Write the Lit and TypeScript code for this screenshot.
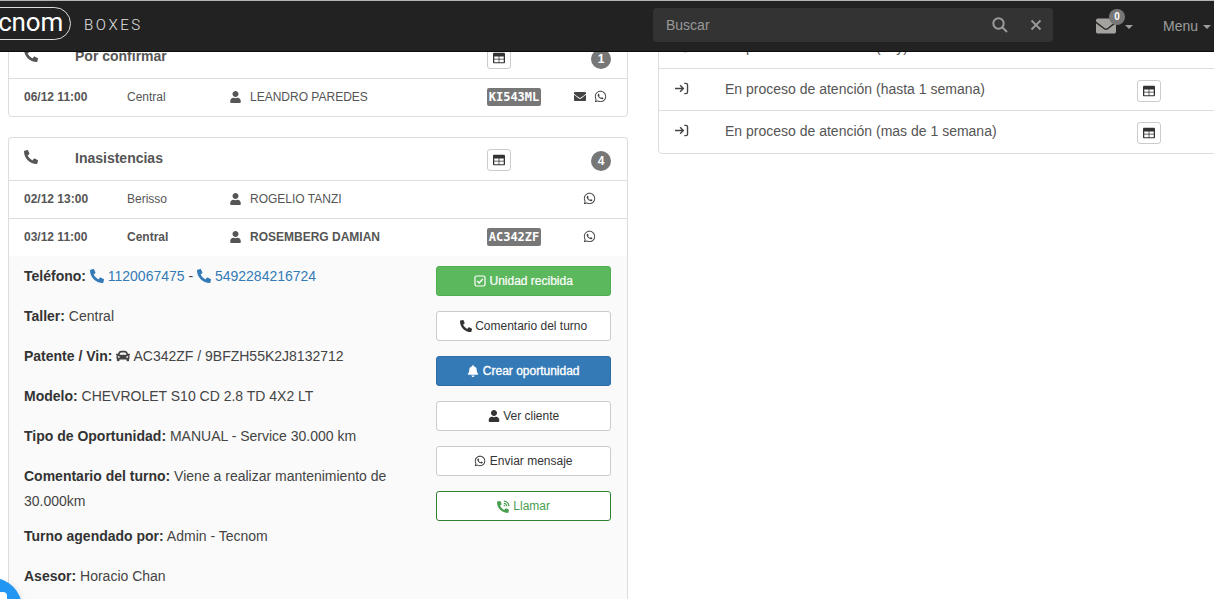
import { LitElement, html, css } from "lit";
import { customElement } from "lit/decorators.js";

const P = {
  phone: ["0 0 512 512", "M497.39 361.8l-112-48a24 24 0 0 0-28 6.9l-49.6 60.6A370.66 370.66 0 0 1 130.6 204.11l60.6-49.6a23.94 23.94 0 0 0 6.9-28l-48-112A24.16 24.16 0 0 0 122.6.61l-104 24A24 24 0 0 0 0 48c0 256.5 207.9 464 464 464a24 24 0 0 0 23.4-18.6l24-104a24.29 24.29 0 0 0-14.01-27.6z"],
  user: ["0 0 448 512", "M224 256c70.7 0 128-57.3 128-128S294.7 0 224 0 96 57.3 96 128s57.3 128 128 128zm89.6 32h-16.7c-22.2 10.2-46.9 16-72.9 16s-50.6-5.8-72.9-16h-16.7C60.2 288 0 348.2 0 422.4V464c0 26.5 21.5 48 48 48h352c26.5 0 48-21.5 48-48v-41.6c0-74.2-60.2-134.4-134.4-134.4z"],
  mail: ["0 0 512 512", "M502.3 190.8c3.9-3.1 9.7-.2 9.7 4.7V400c0 26.5-21.5 48-48 48H48c-26.5 0-48-21.5-48-48V195.6c0-5 5.7-7.8 9.7-4.7 22.4 17.4 52.1 39.5 154.1 113.6 21.1 15.4 56.7 47.8 92.2 47.6 35.7.3 72-32.8 92.3-47.6 102-74.1 131.6-96.3 154-113.7zM256 320c23.2.4 56.6-29.2 73.4-41.4 132.7-96.3 142.8-104.7 173.4-128.7 5.8-4.5 9.2-11.5 9.2-18.9v-19c0-26.5-21.5-48-48-48H48C21.5 64 0 85.5 0 112v19c0 7.4 3.4 14.3 9.2 18.9 30.6 23.9 40.7 32.4 173.4 128.7 16.8 12.2 50.2 41.8 73.4 41.4z"],
  wa: ["0 0 448 512", "M380.9 97.1C339 55.1 283.2 32 223.9 32c-122.4 0-222 99.6-222 222 0 39.1 10.2 77.3 29.6 111L0 480l117.7-30.9c32.4 17.7 68.9 27 106.1 27h.1c122.3 0 224.1-99.6 224.1-222 0-59.3-25.2-115-67.1-157zm-157 341.6c-33.2 0-65.7-8.9-94-25.7l-6.7-4-69.8 18.3L72 359.2l-4.4-7c-18.5-29.4-28.2-63.3-28.2-98.2 0-101.7 82.8-184.5 184.6-184.5 49.3 0 95.6 19.2 130.4 54.1 34.8 34.9 56.2 81.2 56.1 130.5 0 101.8-84.9 184.6-186.6 184.6zm101.2-138.2c-5.5-2.8-32.8-16.2-37.9-18-5.1-1.9-8.8-2.8-12.5 2.8-3.7 5.6-14.3 18-17.6 21.8-3.2 3.7-6.5 4.2-12 1.4-32.6-16.3-54-29.1-75.5-66-5.7-9.8 5.7-9.1 16.3-30.3 1.8-3.7.9-6.9-.5-9.7-1.4-2.8-12.5-30.1-17.1-41.2-4.5-10.8-9.1-9.3-12.5-9.5-3.2-.2-6.9-.2-10.6-.2-3.7 0-9.7 1.4-14.8 6.9-5.1 5.6-19.4 19-19.4 46.3 0 27.3 19.9 53.7 22.6 57.4 2.8 3.7 39.1 59.7 94.8 83.8 35.2 15.2 49 16.5 66.6 13.9 10.7-1.6 32.8-13.4 37.4-26.4 4.6-13 4.6-24.1 3.2-26.4-1.3-2.5-5-3.9-10.5-6.6z"],
  table: ["0 0 512 512", "M464 32H48C21.49 32 0 53.49 0 80v352c0 26.51 21.49 48 48 48h416c26.51 0 48-21.49 48-48V80c0-26.51-21.49-48-48-48zM240 432H54v-112h186v112zm0-144H54v-100h186v100zm218 144H272v-112h186v112zm0-144H272v-100h186v100z"],
  bell: ["0 0 448 512", "M224 512c35.32 0 63.97-28.65 63.97-64H160.03c0 35.35 28.65 64 63.97 64zm215.39-149.71c-19.32-20.76-55.47-51.99-55.47-154.29 0-77.7-54.48-139.9-127.94-155.16V32c0-17.67-14.32-32-31.98-32s-31.98 14.33-31.98 32v20.84C118.56 68.1 64.08 130.3 64.08 208c0 102.3-36.15 133.53-55.47 154.29-6 6.45-8.66 14.16-8.61 21.71.11 16.4 12.98 32 32.1 32h383.8c19.12 0 32-15.6 32.1-32 .05-7.55-2.61-15.27-8.61-21.71z"],
  car: ["0 0 512 512", "M499.99 176h-59.87l-16.64-41.6C406.38 91.63 365.57 64 319.5 64h-127c-46.06 0-86.88 27.63-103.99 70.4L71.87 176H12.01C4.2 176-1.53 183.34.37 190.91l6 24C7.7 220.25 12.5 224 18.01 224h20.07C24.65 235.73 16 252.78 16 272v48c0 16.12 6.16 30.67 16 41.93V416c0 17.67 14.33 32 32 32h32c17.67 0 32-14.33 32-32v-32h256v32c0 17.67 14.33 32 32 32h32c17.67 0 32-14.33 32-32v-54.07c9.84-11.25 16-25.8 16-41.93v-48c0-19.22-8.65-36.27-22.07-48H494c5.51 0 10.31-3.75 11.64-9.09l6-24c1.89-7.57-3.84-14.91-11.65-14.91zm-352.06-17.83c7.29-18.22 24.94-30.17 44.57-30.17h127c19.63 0 37.28 11.95 44.57 30.17L384 208H128l19.93-49.83zM96 319.8c-19.2 0-32-12.76-32-31.9S76.8 256 96 256s48 28.71 48 47.85-28.8 15.95-48 15.95zm320 0c-19.2 0-48 3.19-48-15.95S396.8 256 416 256s32 12.76 32 31.9-12.8 31.9-32 31.9z"],
};

const ic = (k: keyof typeof P, cls = "") =>
  html`<svg class="ic ${cls}" viewBox=${P[k][0]} aria-hidden="true"><path d=${P[k][1]} fill-rule="evenodd"></path></svg>`;

const signIn = html`<svg class="signin" viewBox="0 0 16 14" aria-hidden="true"><path d="M1 7h8.5M6.500 3.500 10 7l-3.500 3.500M11 1.500h1.800c1 0 1.700.7 1.700 1.700v7.600c0 1-.7 1.700-1.700 1.700H11" fill="none" stroke="currentColor" stroke-width="1.500"></path></svg>`;
const checkSq = html`<svg class="ic" viewBox="0 0 12 12" aria-hidden="true"><rect x="1" y="1" width="10" height="10" rx="1.500" fill="none" stroke="currentColor" stroke-width="1.200"></rect><path d="M3.200 6 5.200 8 8.800 4" fill="none" stroke="currentColor" stroke-width="1.300"></path></svg>`;
const phoneVol = html`<svg class="ic vol" viewBox="0 0 512 512" aria-hidden="true"><path transform="translate(0 40) scale(.92)" d=${P.phone[1]}></path><path d="M270 130a110 110 0 0 1 112 112M270 45a195 195 0 0 1 197 197M262 210a40 40 0 0 1 40 40" fill="none" stroke="currentColor" stroke-width="50"></path></svg>`;

const tableBtn = html`<button class="tbl" aria-label="Tabla">${ic("table")}</button>`;

@customElement("app-root")
export class AppRoot extends LitElement {
  static styles = css`
    :host {
      display: block;
      position: relative;
      width: 1214px;
      height: 599px;
      overflow: hidden;
      background: #fff;
      font-family: "Liberation Sans", Arial, sans-serif;
      font-size: 14px;
      color: #333;
    }
    * { box-sizing: border-box; }
    .ic { width: 1em; height: 1em; fill: currentColor; display: inline-block; vertical-align: -0.125em; }

    .nav {
      position: relative;
      z-index: 2;
      height: 52px;
      background: #222;
      border-top: 1px solid #b5b5b5;
      border-bottom: 1px solid #0c0c0c;
      display: flex;
      align-items: center;
    }
    .logo {
      margin-left: -28px;
      margin-top: -5px;
      width: 99px;
      height: 33px;
      border: 1.500px solid #ddd;
      border-radius: 17px;
      color: #fff;
      font-family: Roboto, "Liberation Sans", sans-serif;
      font-size: 26px;
      font-weight: 400;
      line-height: 29px;
      text-align: right;
      padding-right: 7px;
      letter-spacing: -0.2px;
      flex: none;
    }
    .brand {
      margin-left: 13px;
      margin-top: -2px;
      color: #e2e2e2;
      font-family: Roboto, "Liberation Sans", sans-serif;
      font-weight: 300;
      font-size: 15px;
      letter-spacing: 2.600px;
      width: 569px;
      flex: none;
    }
    .search {
      width: 400px;
      height: 34px;
      margin-top: -3px;
      background: #333;
      border-radius: 4px;
      display: flex;
      align-items: center;
      padding: 0 11px 0 13px;
      color: #999;
      flex: none;
    }
    .search .ph { flex: 1; }
    .search svg { display: block; fill: none; stroke: #999; }
    .search .s { width: 16px; height: 16px; stroke-width: 2; margin-right: 22px; }
    .search .x { width: 12px; height: 12px; stroke-width: 1.800; }
    .mail {
      position: relative;
      margin-left: 43px;
      width: 37px;
      height: 30px;
      flex: none;
      color: #a5a39f;
    }
    .mail .ic { position: absolute; left: 0; top: 3px; font-size: 20px; width: 20px; height: 24px; }
    .mail .dot {
      position: absolute;
      left: 13px;
      top: -2px;
      width: 16px;
      height: 16px;
      border-radius: 50%;
      background: #777;
      color: #fff;
      font-size: 10px;
      font-weight: 700;
      text-align: center;
      line-height: 16px;
    }
    .caret {
      display: inline-block;
      width: 0;
      height: 0;
      border-left: 4px solid transparent;
      border-right: 4px solid transparent;
      border-top: 4px solid #9d9d9d;
      vertical-align: middle;
    }
    .mail .caret { position: absolute; left: 29px; top: 14px; }
    .menu { margin-left: 30px; color: #9d9d9d; margin-top: -1px; white-space: nowrap; flex: none; }
    .menu .caret { margin-left: 5px; }

    .main {
      margin-top: -26px;
      padding-left: 8px;
      display: flex;
      gap: 30px;
      align-items: flex-start;
      width: 1300px;
    }
    .left { width: 620px; flex: none; padding-top: 9px; display: flex; flex-direction: column; gap: 20px; }
    .right { width: 600px; flex: none; }
    .panel { background: #fff; border: 1px solid #ddd; border-radius: 4px; }
    .panel.open { border-bottom: none; border-radius: 4px 4px 0 0; }

    .head {
      height: 42px;
      padding: 0 16px 0 15px;
      display: grid;
      grid-template-columns: 51px 412px 1fr auto;
      align-items: center;
      color: #555;
    }
    .head .ic.ph { font-size: 14px; margin-top: -4px; }
    .head b { font-size: 14px; margin-top: -3px; }
    .tbl {
      width: 24px;
      height: 22px;
      margin-top: 2px;
      padding: 0;
      background: #fff;
      border: 1px solid #ccc;
      border-radius: 3px;
      color: #333;
      display: flex;
      align-items: center;
      justify-content: center;
      font-size: 12px;
    }
    .tbl .ic { display: block; }
    .count {
      width: 20px;
      height: 20px;
      border-radius: 50%;
      background: #777;
      color: #fff;
      font-size: 12px;
      font-weight: 700;
      text-align: center;
      line-height: 20px;
      margin-top: 4px;
    }
    .row {
      height: 38px;
      border-top: 1px solid #ddd;
      padding: 0 16px 2px 15px;
      display: grid;
      grid-template-columns: 103px 103px 257px 81px 43px;
      align-items: center;
      font-size: 12px;
      color: #555;
    }
    .row .name { display: flex; align-items: center; gap: 9px; }
    .row .name .ic { font-size: 12px; width: 11px; }
    .row.sel .c, .row.sel .name { font-weight: 700; }
    .plate {
      display: block;
      width: 54px;
      height: 18px;
      margin-top: 1px;
      background: #777;
      color: #fff;
      border-radius: 2px;
      font-family: "DejaVu Sans Mono", "Liberation Mono", monospace;
      font-size: 12px;
      font-weight: 700;
      line-height: 18px;
      text-align: center;
    }
    .acts { display: flex; justify-content: center; align-items: center; gap: 8px; color: #444; }
    .acts .ic { display: block; font-size: 13px; }
    .acts .ic:first-child:not(:last-child) { font-size: 13px; width: 12px; margin-left: 1px; }

    .detail {
      background: #fafafa;
      padding: 8px 16px 0 15px;
      display: flex;
      gap: 24px;
      height: 400px;
    }
    .info { width: 388px; flex: none; }
    .info p { margin: 0 0 15px; line-height: 25px; font-size: 14px; color: #444; }
    .info p.tight { margin-bottom: 10px; }
    .info b { color: #333; }
    .info a { color: #337ab7; text-decoration: none; }
    .info .ic { font-size: 14px; }
    .btns { width: 175px; flex: none; padding-top: 2px; display: flex; flex-direction: column; gap: 15px; }
    .btn {
      height: 30px;
      border: 1px solid #ccc;
      border-radius: 3px;
      background: #fff;
      color: #333;
      font-family: inherit;
      font-size: 12px;
      padding: 0;
      text-align: center;
    }
    .btn .ic { font-size: 12px; }
    .btn .ic.vol { font-size: 13px; vertical-align: -0.2em; }
    .btn.ok { background: #5cb85c; border-color: #4cae4c; color: #fff; -webkit-text-stroke: 0.2px #fff; }
    .btn.pri { background: #337ab7; border-color: #2e6da4; color: #fff; -webkit-text-stroke: 0.35px #fff; }
    .btn.out { border-color: #2f7f33; color: #4a9e4f; }

    .rrow {
      height: 42px;
      padding-left: 15px;
      display: grid;
      grid-template-columns: 51px 412px auto;
      align-items: center;
      border-bottom: 1px solid #ddd;
      color: #555;
      justify-content: start;
    }
    .rrow:last-child { border-bottom: none; padding-bottom: 1px; }
    .signin { width: 15px; height: 13px; display: block; color: #444; margin-top: -2px; }
    .rrow span { margin-top: -1px; }

    .chat {
      position: absolute;
      left: -38px;
      top: 578px;
      width: 60px;
      height: 60px;
      border-radius: 50%;
      background: #2196f3;
      box-shadow: 0 1px 6px rgba(0,0,0,.12);
      z-index: 3;
    }
    .chat::after {
      content: "";
      position: absolute;
      left: 30px;
      top: 14px;
      width: 15px;
      height: 15px;
      border-radius: 4px;
      background: #fff;
    }
  `;

  private row(date: string, place: string, name: string, plate: string, mail: boolean, sel = false) {
    return html`<div class="row ${sel ? "sel" : ""}">
      <b>${date}</b>
      <span class="c">${place}</span>
      <span class="name">${ic("user")}${name}</span>
      <span>${plate ? html`<span class="plate">${plate}</span>` : ""}</span>
      <span class="acts">${mail ? ic("mail") : ""}${ic("wa")}</span>
    </div>`;
  }

  private head(title: string, n: number) {
    return html`<div class="head">
      ${ic("phone", "ph")}
      <b>${title}</b>
      ${tableBtn}
      <span class="count">${n}</span>
    </div>`;
  }

  render() {
    return html`
      <header class="nav">
        <div class="logo">tecnom</div>
        <div class="brand">BOXES</div>
        <div class="search">
          <span class="ph">Buscar</span>
          <svg class="s" viewBox="0 0 16 16"><circle cx="6.500" cy="6.500" r="5.200"></circle><path d="M10.500 10.500 15 15"></path></svg>
          <svg class="x" viewBox="0 0 12 12"><path d="M1.500 1.500l9 9M10.500 1.500l-9 9"></path></svg>
        </div>
        <div class="mail">${ic("mail")}<span class="dot">0</span><i class="caret"></i></div>
        <div class="menu">Menu<i class="caret"></i></div>
      </header>
      <main class="main">
        <div class="left">
          <section class="panel">
            ${this.head("Por confirmar", 1)}
            ${this.row("06/12 11:00", "Central", "LEANDRO PAREDES", "KI543ML", true)}
          </section>
          <section class="panel open">
            ${this.head("Inasistencias", 4)}
            ${this.row("02/12 13:00", "Berisso", "ROGELIO TANZI", "", false)}
            ${this.row("03/12 11:00", "Central", "ROSEMBERG DAMIAN", "AC342ZF", false, true)}
            <div class="detail">
              <div class="info">
                <p><b>Teléfono:</b> <a href="#">${ic("phone")} 1120067475</a> - <a href="#">${ic("phone")} 5492284216724</a></p>
                <p><b>Taller:</b> Central</p>
                <p><b>Patente / Vin:</b> ${ic("car")} AC342ZF / 9BFZH55K2J8132712</p>
                <p><b>Modelo:</b> CHEVROLET S10 CD 2.8 TD 4X2 LT</p>
                <p><b>Tipo de Oportunidad:</b> MANUAL - Service 30.000 km</p>
                <p class="tight"><b>Comentario del turno:</b> Viene a realizar mantenimiento de 30.000km</p>
                <p><b>Turno agendado por:</b> Admin - Tecnom</p>
                <p><b>Asesor:</b> Horacio Chan</p>
              </div>
              <div class="btns">
                <button class="btn ok">${checkSq} Unidad recibida</button>
                <button class="btn">${ic("phone")} Comentario del turno</button>
                <button class="btn pri">${ic("bell")} Crear oportunidad</button>
                <button class="btn">${ic("user")} Ver cliente</button>
                <button class="btn">${ic("wa")} Enviar mensaje</button>
                <button class="btn out">${phoneVol} Llamar</button>
              </div>
            </div>
          </section>
        </div>
        <div class="right">
          <section class="panel">
            <div class="rrow">${signIn}<span>En proceso de atención (hoy)</span></div>
            <div class="rrow">${signIn}<span>En proceso de atención (hasta 1 semana)</span>${tableBtn}</div>
            <div class="rrow">${signIn}<span>En proceso de atención (mas de 1 semana)</span>${tableBtn}</div>
          </section>
        </div>
      </main>
      <div class="chat"></div>
    `;
  }
}
